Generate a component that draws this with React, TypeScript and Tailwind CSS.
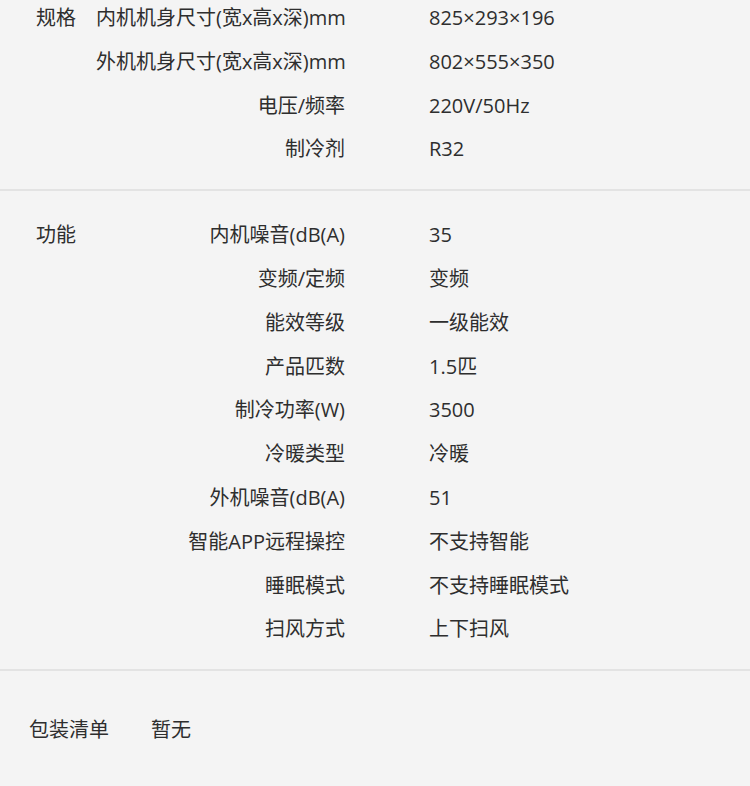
const sections = [
  {
    name: "规格",
    rows: [
      ["内机机身尺寸(宽x高x深)mm", "825×293×196"],
      ["外机机身尺寸(宽x高x深)mm", "802×555×350"],
      ["电压/频率", "220V/50Hz"],
      ["制冷剂", "R32"],
    ],
  },
  {
    name: "功能",
    rows: [
      ["内机噪音(dB(A)", "35"],
      ["变频/定频", "变频"],
      ["能效等级", "一级能效"],
      ["产品匹数", "1.5匹"],
      ["制冷功率(W)", "3500"],
      ["冷暖类型", "冷暖"],
      ["外机噪音(dB(A)", "51"],
      ["智能APP远程操控", "不支持智能"],
      ["睡眠模式", "不支持睡眠模式"],
      ["扫风方式", "上下扫风"],
    ],
  },
];

export default function App() {
  return (
    <div
      className="min-h-[786px] w-[750px] overflow-hidden bg-[#f4f4f4] text-[20px] text-[#2e2e2e] font-['Open_Sans','Noto_Sans_CJK_SC',sans-serif]"
    >
      <div className="-mt-[26px]">
        {sections.map((section) => (
          <div key={section.name} className="flex border-b-2 border-[#e3e3e3] pt-[22px] pb-[18px]">
            <div className="w-[96px] shrink-0 pl-[36px] leading-[44px]">{section.name}</div>
            <div className="flex flex-col">
              {section.rows.map(([label, value]) => (
                <div key={label} className="flex h-[43.8px] items-center leading-[43.8px]">
                  <div className="w-[249px] shrink-0 whitespace-nowrap text-right">{label}</div>
                  <div className="ml-[84px] whitespace-nowrap">{value}</div>
                </div>
              ))}
            </div>
          </div>
        ))}
        <div className="flex gap-[42px] pl-[29px] pt-[37px] pb-[36px] leading-[44px]">
          <div>包装清单</div>
          <div>暂无</div>
        </div>
      </div>
    </div>
  );
}
